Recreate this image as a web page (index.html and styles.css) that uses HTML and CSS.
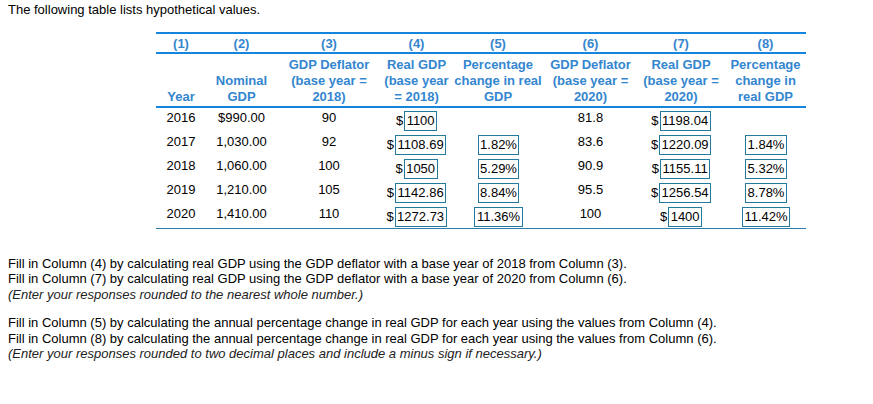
FILE: index.html
```html
<!DOCTYPE html>
<html>
<head>
<meta charset="utf-8">
<link rel="stylesheet" href="styles.css">
</head>
<body>
<div class="page">
  <p class="intro">The following table lists hypothetical values.</p>
  <table class="data">
    <colgroup>
      <col class="c1"><col class="c2"><col class="c3"><col class="c4"><col class="c5"><col class="c6"><col class="c7"><col class="c8">
    </colgroup>
    <thead>
      <tr class="nums">
        <th>(1)</th><th>(2)</th><th>(3)</th><th>(4)</th><th>(5)</th><th>(6)</th><th>(7)</th><th>(8)</th>
      </tr>
      <tr class="labels">
        <th>Year</th>
        <th>Nominal GDP</th>
        <th>GDP Deflator (base year = 2018)</th>
        <th>Real GDP (base year = 2018)</th>
        <th>Percentage change in real GDP</th>
        <th>GDP Deflator (base year = 2020)</th>
        <th>Real GDP (base year = 2020)</th>
        <th>Percentage change in real GDP</th>
      </tr>
    </thead>
    <tbody>
      <tr>
        <td>2016</td><td>$990.00</td><td>90</td>
        <td class="inp">$<span class="box">1100</span></td>
        <td class="inp"></td>
        <td>81.8</td>
        <td class="inp">$<span class="box">1198.04</span></td>
        <td class="inp"></td>
      </tr>
      <tr>
        <td>2017</td><td>1,030.00</td><td>92</td>
        <td class="inp">$<span class="box">1108.69</span></td>
        <td class="inp"><span class="box">1.82%</span></td>
        <td>83.6</td>
        <td class="inp">$<span class="box">1220.09</span></td>
        <td class="inp"><span class="box">1.84%</span></td>
      </tr>
      <tr>
        <td>2018</td><td>1,060.00</td><td>100</td>
        <td class="inp">$<span class="box">1050</span></td>
        <td class="inp"><span class="box">5.29%</span></td>
        <td>90.9</td>
        <td class="inp">$<span class="box">1155.11</span></td>
        <td class="inp"><span class="box">5.32%</span></td>
      </tr>
      <tr>
        <td>2019</td><td>1,210.00</td><td>105</td>
        <td class="inp">$<span class="box">1142.86</span></td>
        <td class="inp"><span class="box">8.84%</span></td>
        <td>95.5</td>
        <td class="inp">$<span class="box">1256.54</span></td>
        <td class="inp"><span class="box">8.78%</span></td>
      </tr>
      <tr class="last">
        <td>2020</td><td>1,410.00</td><td>110</td>
        <td class="inp">$<span class="box">1272.73</span></td>
        <td class="inp"><span class="box">11.36%</span></td>
        <td>100</td>
        <td class="inp">$<span class="box">1400</span></td>
        <td class="inp"><span class="box">11.42%</span></td>
      </tr>
    </tbody>
  </table>
  <p class="instr">Fill in Column (4) by calculating real GDP using the GDP deflator with a base year of 2018 from Column (3).<br>
  Fill in Column (7) by calculating real GDP using the GDP deflator with a base year of 2020 from Column (6).<br>
  <em>(Enter your responses rounded to the nearest whole number.)</em></p>
  <p class="instr second">Fill in Column (5) by calculating the annual percentage change in real GDP for each year using the values from Column (4).<br>
  Fill in Column (8) by calculating the annual percentage change in real GDP for each year using the values from Column (6).<br>
  <em>(Enter your responses rounded to two decimal places and include a minus sign if necessary.)</em></p>
</div>
</body>
</html>
```

FILE: styles.css
```css
html, body {
  margin: 0;
  padding: 0;
  background: #ffffff;
}

.page {
  padding: 2px 8px 0 8px;
  font-family: "Liberation Sans", Arial, sans-serif;
  font-size: 13px;
  line-height: 15.5px;
  color: #000000;
}

.intro {
  margin: 0;
}

.data {
  margin: 14px 0 0 148px;
  width: 650px;
  table-layout: fixed;
  border-collapse: separate;
  border-spacing: 0;
  border-top: 2px solid #1584dc;
}

.c1 { width: 50px; }
.c2 { width: 71px; }
.c3 { width: 104px; }
.c4 { width: 71px; }
.c5 { width: 92px; }
.c6 { width: 93px; }
.c7 { width: 88px; }
.c8 { width: 81px; }

.data th {
  font-weight: bold;
  color: #3486cf;
  text-align: center;
  line-height: 16px;
  padding: 0;
}

.nums th {
  padding-top: 2px;
  height: 16px;
  border-bottom: 2px solid #1584dc;
}

.labels th {
  height: 51px;
  padding-bottom: 1px;
  vertical-align: bottom;
  border-bottom: 2px solid #1584dc;
}

.data td {
  text-align: center;
  vertical-align: top;
  line-height: 16px;
  padding: 2px 0 6px 0;
  color: #000000;
  white-space: nowrap;
}

.data td.inp {
  line-height: 20px;
  padding: 3px 0 1px 0;
}

.box {
  display: inline-block;
  vertical-align: top;
  box-sizing: border-box;
  height: 20px;
  line-height: 18px;
  padding: 0 1.5px;
  margin-left: 1px;
  border: 1px solid #237a9c;
}

.last td {
  border-bottom: 1px solid #2a7cad;
}

.instr {
  margin: 27px 0 0 0;
}

.instr.second {
  margin-top: 13px;
}

.instr em {
  font-style: italic;
  color: #222222;
}
```
